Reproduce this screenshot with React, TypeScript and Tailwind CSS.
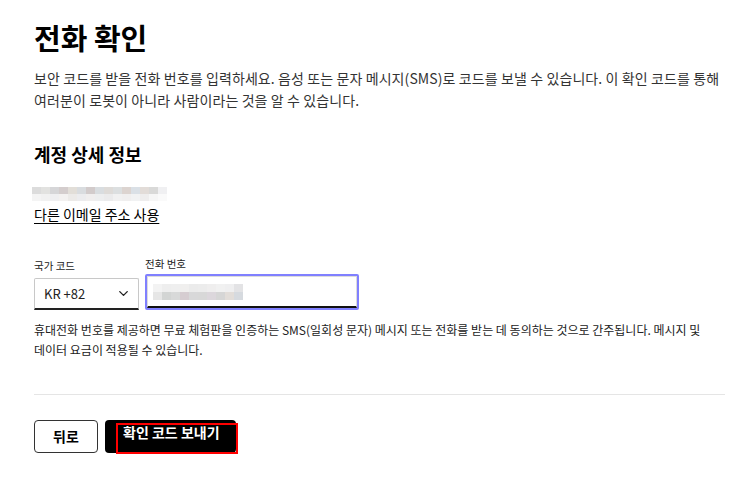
import { ChevronDown } from 'lucide-react';

const FONT = { fontFamily: '"Noto Sans CJK KR", "Noto Sans", sans-serif' };

const emailTop = ['#dcdcdc', '#e2e2e0', '#d6d6d8', '#d4cdcd', '#e2ded8', '#d9dcdf', '#d2cbcb', '#d9dde0', '#dedbd8', '#dcdfe0', '#dcd4d0', '#dae0e6', '#e2dcd8', '#d9d9d8', '#f0f0f2'];
const emailBottom = ['#f4f4f4', '#f1f1f1', '#efeff1', '#f3f1f0', '#eceae8', '#ececee', '#f0eeee', '#edeeef', '#ebebec', '#f1f1f1', '#f0efef', '#f1f2f3', '#eeeded', '#f6f6f6', '#fafafa'];
const phoneTop = ['#f3f3f3', '#eeeeee', '#efefef', '#f0efee', '#ebebeb', '#ececec', '#efeeee', '#f1f1f1', '#efeff0', '#e3e3e5'];
const phoneBottom = ['#e6e6e6', '#d3d5d4', '#d8d9d9', '#d6cdd1', '#d8d8d9', '#d8d8d8', '#dcd7dc', '#d6d6d6', '#e2ddd9', '#d6dadf'];

function Blur({ top, bottom, cell, h }: { top: string[]; bottom: string[]; cell: number; h: number }) {
  return (
    <div className="flex flex-col">
      {[top, bottom].map((row, r) => (
        <div key={r} className="flex">
          {row.map((c, i) => (
            <div key={i} style={{ backgroundColor: c, width: cell, height: h }} />
          ))}
        </div>
      ))}
    </div>
  );
}

export default function App() {
  return (
    <div className="min-h-[502px] w-[755px] bg-white text-[#1a1a1a]" style={FONT}>
      <div className="w-[725px] pl-[34px] pt-[18px]">
        <h1 className="text-[29px] font-bold leading-[38px] text-black">전화 확인</h1>

        <p className="mt-[11px] break-keep text-[14px] leading-[22px] tracking-[0.1px] text-[#333]">
          보안 코드를 받을 전화 번호를 입력하세요. 음성 또는 문자 메시지(SMS)로 코드를 보낼 수 있습니다. 이 확인 코드를 통해 여러분이 로봇이 아니라 사람이라는 것을 알 수 있습니다.
        </p>

        <h2 className="mt-[32px] text-[18px] font-semibold leading-[22px] text-black">계정 상세 정보</h2>

        <div className="-ml-[2px] mt-[22px]">
          <Blur top={emailTop} bottom={emailBottom} cell={9} h={7} />
        </div>

        <a href="#" className="mt-[3px] inline-block text-[14px] leading-[18px] text-black underline underline-offset-[3px]">
          다른 이메일 주소 사용
        </a>

        <div className="mt-[33px] flex items-end gap-[6px]">
          <div className="flex flex-col">
            <span className="mb-[6px] text-[10.5px] leading-[12px] text-[#222]">국가 코드</span>
            <div className="flex h-[32px] w-[105px] items-center justify-between rounded-tl-[2px] rounded-tr-[2px] border border-b-2 border-[#c8c8c8] border-b-[#222] pl-[9px] pr-[7px]">
              <span className="text-[13px] text-[#222]">KR +82</span>
              <ChevronDown className="h-[15px] w-[15px] text-[#222]" strokeWidth={2.2} />
            </div>
          </div>
          <div className="flex flex-col">
            <span className="mb-[4px] text-[10.5px] leading-[12px] text-[#222]">전화 번호</span>
            <div className="h-[36px] w-[214px] rounded-[2px] border-2 border-[#8080ff]">
              <div className="flex h-full items-center border border-b-2 border-[#dcdcdc] border-b-[#111] pl-[5px]">
                <Blur top={phoneTop} bottom={phoneBottom} cell={9} h={8} />
              </div>
            </div>
          </div>
        </div>

        <p className="mt-[10px] break-keep text-[12px] leading-[20px] text-[#222]">
          휴대전화 번호를 제공하면 무료 체험판을 인증하는 SMS(일회성 문자) 메시지 또는 전화를 받는 데 동의하는 것으로 간주됩니다. 메시지 및 데이터 요금이 적용될 수 있습니다.
        </p>

        <div className="mt-[34px] h-px w-[691px] bg-[#e5e5e5]" />

        <div className="mt-[25px] flex gap-[7px]">
          <button className="h-[33px] w-[64px] rounded-[4px] border border-[#333] bg-white text-[14px] font-bold text-black">
            뒤로
          </button>
          <button className="relative h-[33px] w-[131px] rounded-[4px] bg-black text-left">
            <span className="absolute left-[11px] top-[3px] h-[31px] w-[122px] border-2 border-[#ff0000]" />
            <span className="absolute left-[18px] top-[3px] text-[14px] font-bold leading-[18px] text-white">확인 코드 보내기</span>
          </button>
        </div>
      </div>
    </div>
  );
}
